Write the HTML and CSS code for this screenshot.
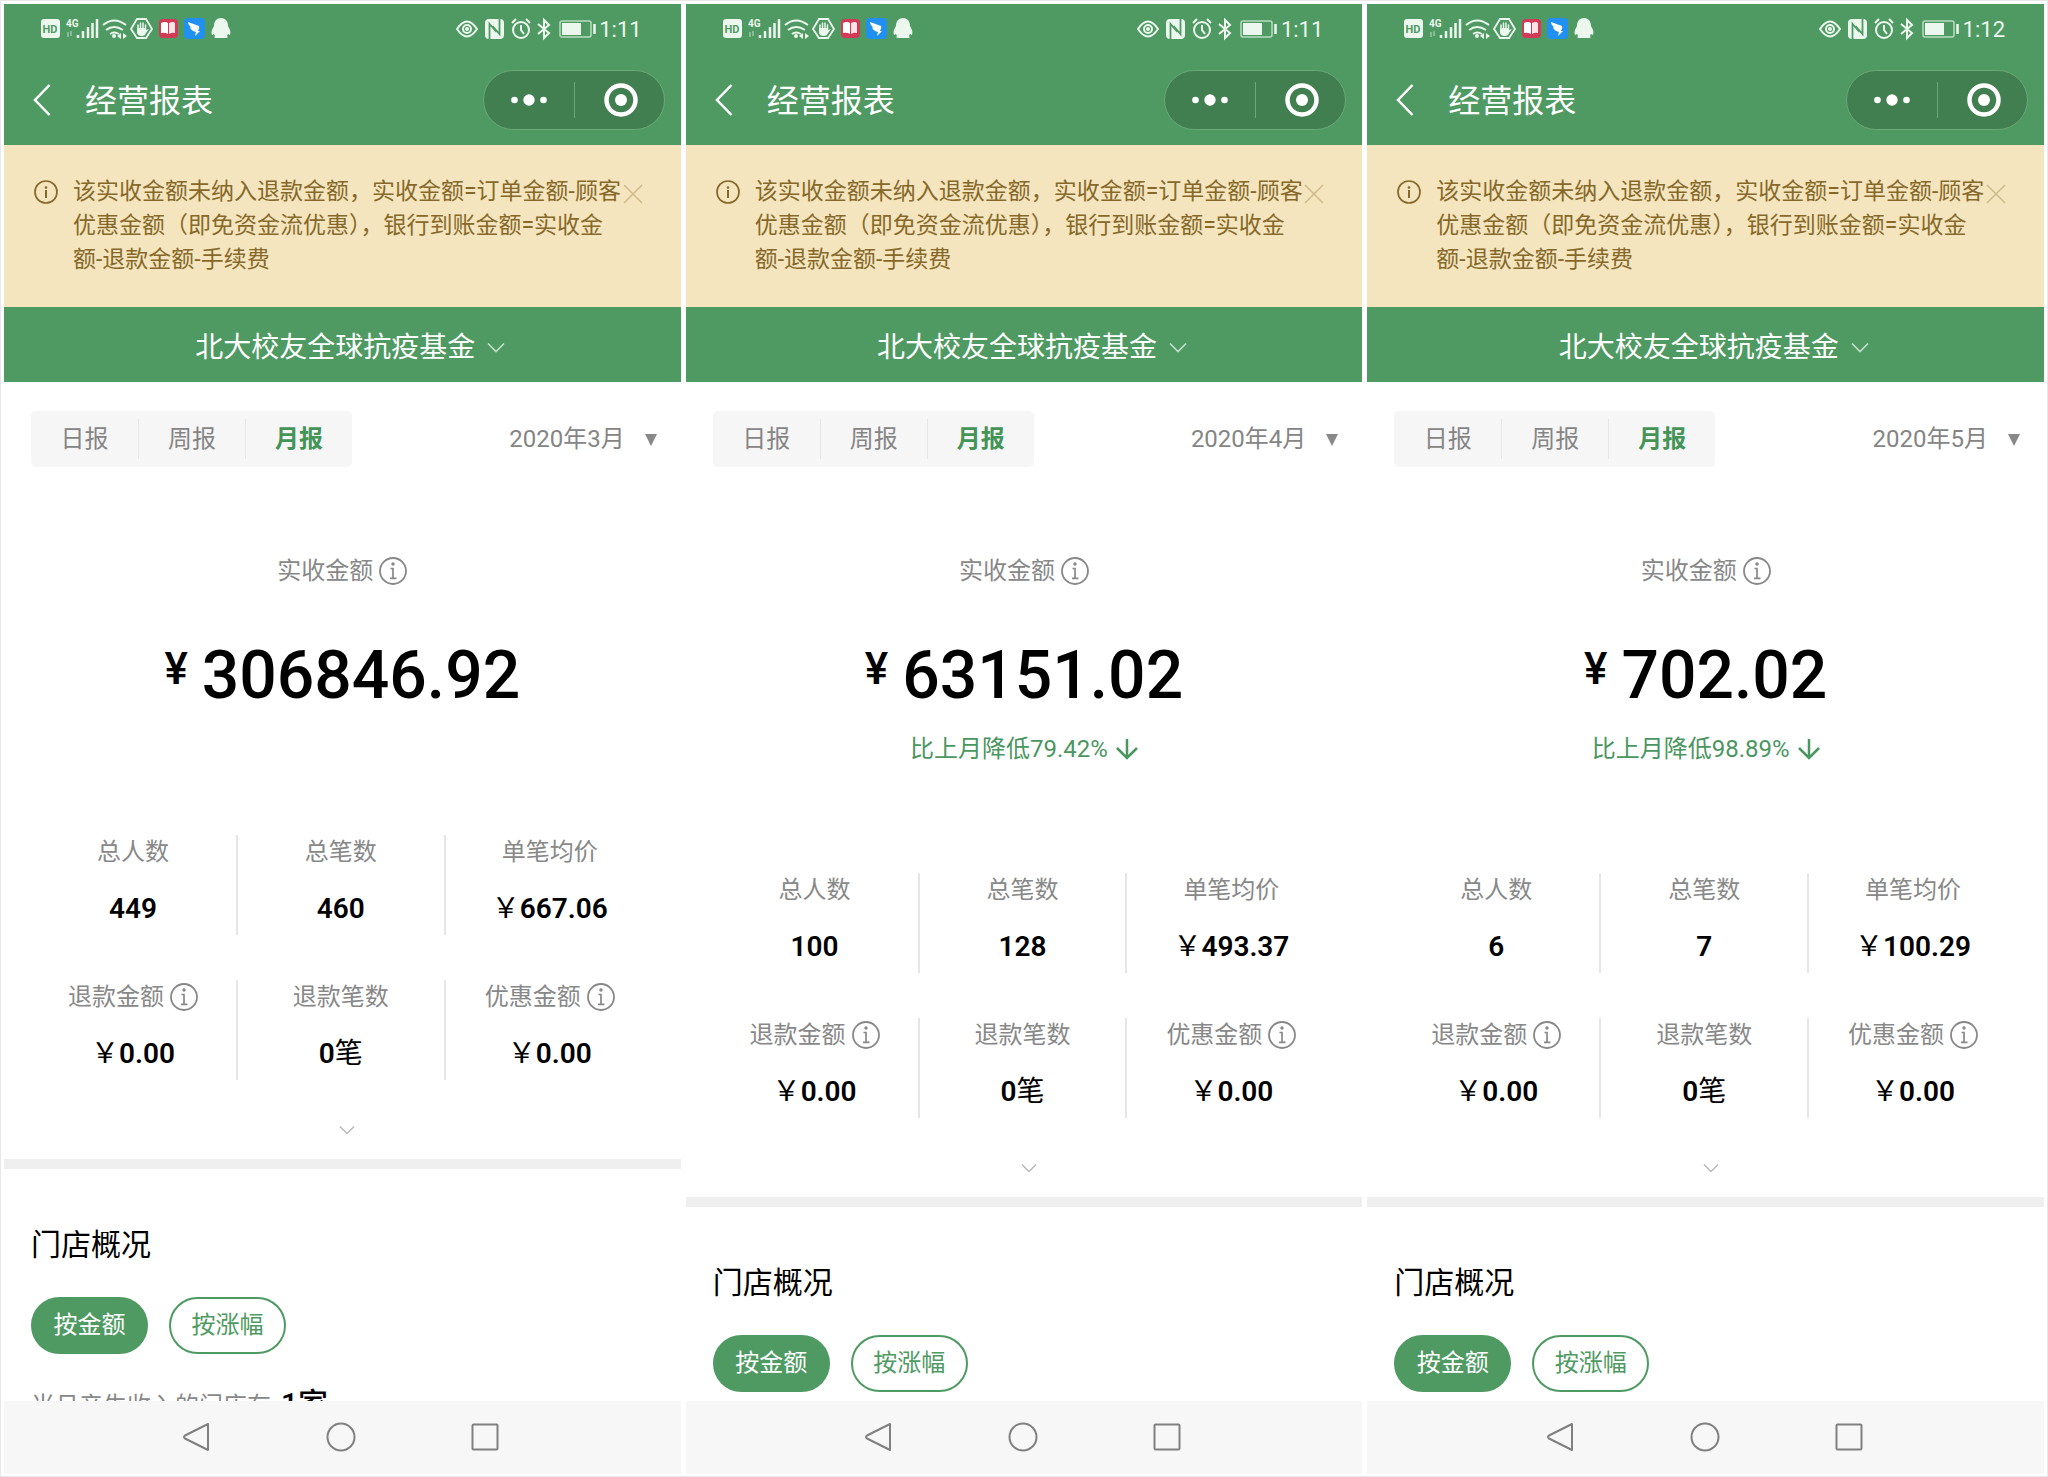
FILE: index.html
```html
<!DOCTYPE html>
<html lang="zh-CN">
<head>
    <meta charset="UTF-8">
    <meta name="viewport" content="width=device-width, initial-scale=1.0">
    <title>经营报表</title>
    <link rel="stylesheet" href="styles.css">
</head>
<body>
    <!-- shared icons -->
    <svg class="sprite" aria-hidden="true">
        <symbol id="i-left" viewBox="0 0 192 24">
            <rect x="1" y="2" width="19" height="19" rx="3" fill="#ecf7ee"/>
            <text x="10" y="16" class="hd-text">HD</text>
            <text x="26" y="10" class="net-text">4G</text>
            <path d="M28 20v-5M31 14v5" stroke="#9bc9a5" stroke-width="1.5"/>
            <path d="M38 21v-3M43 21v-7M48 21V10M52.500 21V6M57 21V2" stroke="#ecf7ee" stroke-width="2.5" fill="none"/>
            <path d="M63 8q11-9 23 0M66 13q8-6 17 0M70 17q4-3 9 0" stroke="#ecf7ee" stroke-width="2" fill="none"/>
            <circle cx="74" cy="19" r="2" fill="#ecf7ee"/>
            <path d="M81 16v6l-4-3zM83 16v6l4-3z" fill="#ecf7ee"/>
            <path d="M97 2h9l6 10-6 9h-9l-6-9z" stroke="#ecf7ee" stroke-width="1.8" fill="none"/>
            <path d="M97 11v4q0 4 5 4 3 0 4-3l3-4-3 1v-2z" fill="#ecf7ee"/>
            <path d="M98 13V8M100.500 12V6M103 12V6M105.500 13V8" stroke="#ecf7ee" stroke-width="1.5" stroke-linecap="round"/>
            <rect x="119" y="2" width="19" height="19" rx="4" fill="#d43a57"/>
            <path d="M121 6q4-2 7 0v11q-3-2-7-1z" fill="#fff"/>
            <path d="M129 6q4-2 6 0v10q-3-1-6 1z" fill="#fbe3e6"/>
            <rect x="144" y="1" width="21" height="21" rx="4" fill="#2090f3"/>
            <path d="M148 5l11 4q1 2-1 5h2l-5 5 1-4-3-1q-3-2-3-4l2 1q-4-3-4-6z" fill="#fff"/>
            <path d="M181 1c5 0 7 4 7 8 2 4 3 5 2 9l-2-1-1 2c1 1 1 2-1 2h-10c-2 0-2-1-1-2l-1-2-2 1c-1-4 0-5 2-9 0-4 2-8 7-8z" fill="#ecf7ee"/>
        </symbol>
        <symbol id="i-right" viewBox="0 0 142 24">
            <path d="M1 12q10-15 20 0-10 15-20 0z" fill="none" stroke="#ecf7ee" stroke-width="2"/>
            <circle cx="11" cy="12" r="4" fill="none" stroke="#ecf7ee" stroke-width="2"/>
            <circle cx="11" cy="12" r="2" fill="#ecf7ee"/>
            <rect x="29" y="2" width="19" height="20" rx="4" fill="#ecf7ee"/>
            <path d="M33.500 22V7l7 8M43.500 2v15l-7-8" fill="none" stroke="#4f9a63" stroke-width="1.800"/>
            <circle cx="65" cy="13" r="8" fill="none" stroke="#ecf7ee" stroke-width="2"/>
            <path d="M65 8v5l3 4M56 6l4-4M74 6l-4-4" fill="none" stroke="#ecf7ee" stroke-width="2"/>
            <path d="M82 7l11 9-5 5V3l5 5-11 9" fill="none" stroke="#ecf7ee" stroke-width="2"/>
            <rect x="104" y="4" width="31" height="16" rx="2" fill="none" stroke="#b9dbc0" stroke-width="1.500"/>
            <rect x="106" y="6" width="19" height="12" fill="#ecf7ee"/>
            <path d="M138.500 7v10" stroke="#ecf7ee" stroke-width="2.500"/>
        </symbol>
        <symbol id="i-back" viewBox="0 0 18 32"><path d="M16.500 1L2 16l14.500 15" fill="none" stroke="#fff" stroke-width="2.500"/></symbol>
        <symbol id="i-dots" viewBox="0 0 36 12"><circle cx="3.500" cy="6" r="3.300" fill="#fff"/><circle cx="18" cy="6" r="5.700" fill="#fff"/><circle cx="32.500" cy="6" r="3.300" fill="#fff"/></symbol>
        <symbol id="i-target" viewBox="0 0 34 34"><circle cx="17" cy="17" r="14.500" fill="none" stroke="#fff" stroke-width="4.500"/><circle cx="17" cy="17" r="6" fill="#fff"/></symbol>
        <symbol id="i-tip" viewBox="0 0 24 24"><circle cx="12" cy="12" r="11" fill="none" stroke="currentColor" stroke-width="1.700"/><circle cx="12" cy="7.500" r="1.300" fill="currentColor"/><path d="M12 10v8" stroke="currentColor" stroke-width="2"/></symbol>
        <symbol id="i-info" viewBox="0 0 28 28"><circle cx="14" cy="14" r="13" fill="none" stroke="currentColor" stroke-width="1.800"/><circle cx="14" cy="7" r="1.700" fill="currentColor"/><path d="M11.500 11.500H14V21M11 21.300h6.500" fill="none" stroke="currentColor" stroke-width="1.700"/></symbol>
        <symbol id="i-close" viewBox="0 0 20 20"><path d="M1 1l18 18M19 1L1 19" stroke="#cfba8b" stroke-width="1.500"/></symbol>
        <symbol id="i-down" viewBox="0 0 18 12"><path d="M1 1.500l8 8 8-8" fill="none" stroke="currentColor" stroke-width="1.600"/></symbol>
        <symbol id="i-caret" viewBox="0 0 12 14"><path d="M0 1h12L6 13z" fill="#888"/></symbol>
        <symbol id="i-drop" viewBox="0 0 22 22"><path d="M11 1v19M1 10l10 10 10-10" fill="none" stroke="currentColor" stroke-width="2.500"/></symbol>
        <symbol id="i-nav-back" viewBox="0 0 30 30"><path d="M26 2v26L3 16.500q-2-1.500 0-3z" fill="none" stroke="#808080" stroke-width="2" stroke-linejoin="round"/></symbol>
        <symbol id="i-nav-home" viewBox="0 0 30 30"><circle cx="15" cy="15" r="13.500" fill="none" stroke="#808080" stroke-width="2"/></symbol>
        <symbol id="i-nav-recent" viewBox="0 0 30 30"><rect x="2.500" y="2.500" width="25" height="25" rx="1" fill="none" stroke="#808080" stroke-width="2"/></symbol>
    </svg>

    <main class="board">
        <section class="phone">
            <header class="header">
                <div class="status">
                    <svg class="status-left"><use href="#i-left"/></svg>
                    <svg class="status-right"><use href="#i-right"/></svg>
                    <span class="time">1:11</span>
                </div>
                <div class="titlebar">
                    <button class="back" aria-label="返回"><svg width="18" height="32"><use href="#i-back"/></svg></button>
                    <h1>经营报表</h1>
                    <div class="capsule">
                        <button aria-label="更多"><svg width="36" height="12"><use href="#i-dots"/></svg></button>
                        <button aria-label="关闭"><svg width="34" height="34"><use href="#i-target"/></svg></button>
                    </div>
                </div>
            </header>
            <div class="notice">
                <svg class="tip" width="24" height="24"><use href="#i-tip"/></svg>
                <p>该实收金额未纳入退款金额，实收金额=订单金额-顾客优惠金额（即免资金流优惠），银行到账金额=实收金额-退款金额-手续费</p>
                <button class="close" aria-label="关闭提示"><svg width="20" height="20"><use href="#i-close"/></svg></button>
            </div>
            <button class="store">北大校友全球抗疫基金<svg width="18" height="12"><use href="#i-down"/></svg></button>
            <div class="content">
                <div class="filter">
                    <div class="tabs">
                        <button>日报</button>
                        <button>周报</button>
                        <button class="active">月报</button>
                    </div>
                    <button class="month">2020年3月<svg width="12" height="14"><use href="#i-caret"/></svg></button>
                </div>
                <div class="hero">
                    <div class="label">实收金额<svg width="28" height="28"><use href="#i-info"/></svg></div>
                    <div class="amount"><span class="yen">¥</span>306846.92</div>
                </div>
                <div class="stats">
                    <div class="stat"><div class="label">总人数</div><div class="value">449</div></div>
                    <div class="stat"><div class="label">总笔数</div><div class="value">460</div></div>
                    <div class="stat"><div class="label">单笔均价</div><div class="value"><span class="cn">￥</span>667.06</div></div>
                    <div class="stat"><div class="label">退款金额<svg width="28" height="28"><use href="#i-info"/></svg></div><div class="value"><span class="cn">￥</span>0.00</div></div>
                    <div class="stat"><div class="label">退款笔数</div><div class="value">0<span class="cn">笔</span></div></div>
                    <div class="stat"><div class="label">优惠金额<svg width="28" height="28"><use href="#i-info"/></svg></div><div class="value"><span class="cn">￥</span>0.00</div></div>
                </div>
                <button class="more" aria-label="展开"><svg width="16" height="11"><use href="#i-down"/></svg></button>
                <div class="shops">
                    <h2>门店概况</h2>
                    <div class="pills">
                        <button class="active">按金额</button>
                        <button>按涨幅</button>
                    </div>
                    <p class="summary">当月产生收入的门店有 <span>1家</span></p>
                </div>
            </div>
            <nav class="navbar">
                <button aria-label="返回"><svg width="30" height="30"><use href="#i-nav-back"/></svg></button>
                <button aria-label="主页"><svg width="30" height="30"><use href="#i-nav-home"/></svg></button>
                <button aria-label="最近任务"><svg width="30" height="30"><use href="#i-nav-recent"/></svg></button>
            </nav>
        </section>

        <section class="phone">
            <header class="header">
                <div class="status">
                    <svg class="status-left"><use href="#i-left"/></svg>
                    <svg class="status-right"><use href="#i-right"/></svg>
                    <span class="time">1:11</span>
                </div>
                <div class="titlebar">
                    <button class="back" aria-label="返回"><svg width="18" height="32"><use href="#i-back"/></svg></button>
                    <h1>经营报表</h1>
                    <div class="capsule">
                        <button aria-label="更多"><svg width="36" height="12"><use href="#i-dots"/></svg></button>
                        <button aria-label="关闭"><svg width="34" height="34"><use href="#i-target"/></svg></button>
                    </div>
                </div>
            </header>
            <div class="notice">
                <svg class="tip" width="24" height="24"><use href="#i-tip"/></svg>
                <p>该实收金额未纳入退款金额，实收金额=订单金额-顾客优惠金额（即免资金流优惠），银行到账金额=实收金额-退款金额-手续费</p>
                <button class="close" aria-label="关闭提示"><svg width="20" height="20"><use href="#i-close"/></svg></button>
            </div>
            <button class="store">北大校友全球抗疫基金<svg width="18" height="12"><use href="#i-down"/></svg></button>
            <div class="content">
                <div class="filter">
                    <div class="tabs">
                        <button>日报</button>
                        <button>周报</button>
                        <button class="active">月报</button>
                    </div>
                    <button class="month">2020年4月<svg width="12" height="14"><use href="#i-caret"/></svg></button>
                </div>
                <div class="hero with-compare">
                    <div class="label">实收金额<svg width="28" height="28"><use href="#i-info"/></svg></div>
                    <div class="amount"><span class="yen">¥</span>63151.02</div>
                    <div class="compare">比上月降低79.42%<svg width="22" height="22"><use href="#i-drop"/></svg></div>
                </div>
                <div class="stats">
                    <div class="stat"><div class="label">总人数</div><div class="value">100</div></div>
                    <div class="stat"><div class="label">总笔数</div><div class="value">128</div></div>
                    <div class="stat"><div class="label">单笔均价</div><div class="value"><span class="cn">￥</span>493.37</div></div>
                    <div class="stat"><div class="label">退款金额<svg width="28" height="28"><use href="#i-info"/></svg></div><div class="value"><span class="cn">￥</span>0.00</div></div>
                    <div class="stat"><div class="label">退款笔数</div><div class="value">0<span class="cn">笔</span></div></div>
                    <div class="stat"><div class="label">优惠金额<svg width="28" height="28"><use href="#i-info"/></svg></div><div class="value"><span class="cn">￥</span>0.00</div></div>
                </div>
                <button class="more" aria-label="展开"><svg width="16" height="11"><use href="#i-down"/></svg></button>
                <div class="shops">
                    <h2>门店概况</h2>
                    <div class="pills">
                        <button class="active">按金额</button>
                        <button>按涨幅</button>
                    </div>
                </div>
            </div>
            <nav class="navbar">
                <button aria-label="返回"><svg width="30" height="30"><use href="#i-nav-back"/></svg></button>
                <button aria-label="主页"><svg width="30" height="30"><use href="#i-nav-home"/></svg></button>
                <button aria-label="最近任务"><svg width="30" height="30"><use href="#i-nav-recent"/></svg></button>
            </nav>
        </section>

        <section class="phone">
            <header class="header">
                <div class="status">
                    <svg class="status-left"><use href="#i-left"/></svg>
                    <svg class="status-right"><use href="#i-right"/></svg>
                    <span class="time">1:12</span>
                </div>
                <div class="titlebar">
                    <button class="back" aria-label="返回"><svg width="18" height="32"><use href="#i-back"/></svg></button>
                    <h1>经营报表</h1>
                    <div class="capsule">
                        <button aria-label="更多"><svg width="36" height="12"><use href="#i-dots"/></svg></button>
                        <button aria-label="关闭"><svg width="34" height="34"><use href="#i-target"/></svg></button>
                    </div>
                </div>
            </header>
            <div class="notice">
                <svg class="tip" width="24" height="24"><use href="#i-tip"/></svg>
                <p>该实收金额未纳入退款金额，实收金额=订单金额-顾客优惠金额（即免资金流优惠），银行到账金额=实收金额-退款金额-手续费</p>
                <button class="close" aria-label="关闭提示"><svg width="20" height="20"><use href="#i-close"/></svg></button>
            </div>
            <button class="store">北大校友全球抗疫基金<svg width="18" height="12"><use href="#i-down"/></svg></button>
            <div class="content">
                <div class="filter">
                    <div class="tabs">
                        <button>日报</button>
                        <button>周报</button>
                        <button class="active">月报</button>
                    </div>
                    <button class="month">2020年5月<svg width="12" height="14"><use href="#i-caret"/></svg></button>
                </div>
                <div class="hero with-compare">
                    <div class="label">实收金额<svg width="28" height="28"><use href="#i-info"/></svg></div>
                    <div class="amount"><span class="yen">¥</span>702.02</div>
                    <div class="compare">比上月降低98.89%<svg width="22" height="22"><use href="#i-drop"/></svg></div>
                </div>
                <div class="stats">
                    <div class="stat"><div class="label">总人数</div><div class="value">6</div></div>
                    <div class="stat"><div class="label">总笔数</div><div class="value">7</div></div>
                    <div class="stat"><div class="label">单笔均价</div><div class="value"><span class="cn">￥</span>100.29</div></div>
                    <div class="stat"><div class="label">退款金额<svg width="28" height="28"><use href="#i-info"/></svg></div><div class="value"><span class="cn">￥</span>0.00</div></div>
                    <div class="stat"><div class="label">退款笔数</div><div class="value">0<span class="cn">笔</span></div></div>
                    <div class="stat"><div class="label">优惠金额<svg width="28" height="28"><use href="#i-info"/></svg></div><div class="value"><span class="cn">￥</span>0.00</div></div>
                </div>
                <button class="more" aria-label="展开"><svg width="16" height="11"><use href="#i-down"/></svg></button>
                <div class="shops">
                    <h2>门店概况</h2>
                    <div class="pills">
                        <button class="active">按金额</button>
                        <button>按涨幅</button>
                    </div>
                </div>
            </div>
            <nav class="navbar">
                <button aria-label="返回"><svg width="30" height="30"><use href="#i-nav-back"/></svg></button>
                <button aria-label="主页"><svg width="30" height="30"><use href="#i-nav-home"/></svg></button>
                <button aria-label="最近任务"><svg width="30" height="30"><use href="#i-nav-recent"/></svg></button>
            </nav>
        </section>
    </main>
</body>
</html>
```
FILE: styles.css
```css
* {
    box-sizing: border-box;
}
body {
    margin: 0;
    background-color: #fff;
    color: #000;
    font-family: Roboto, "Noto Sans CJK SC", sans-serif;
    font-size: 24px;
}
h1, h2, p {
    margin: 0;
    font-weight: 400;
}
button {
    margin: 0;
    padding: 0;
    border: 0;
    background: none;
    color: inherit;
    font: inherit;
    cursor: pointer;
}
svg {
    display: block;
    flex: none;
}
.sprite {
    display: none;
}
.board {
    display: grid;
    grid-template-columns: repeat(3, 1fr);
    grid-template-rows: minmax(0, 1fr);
    gap: 5px;
    height: 100vh;
    padding: 3px 3px 2px;
    border: 1px solid #e8e8e8;
}
.phone {
    display: flex;
    flex-direction: column;
    min-width: 0;
    min-height: 0;
}

/* header */
.header {
    flex: none;
    background-color: #4f9a63;
    color: #fff;
}
.status {
    display: flex;
    align-items: center;
    height: 50px;
    padding: 0 39px 0 36px;
}
.status-left {
    width: 192px;
    height: 24px;
}
.status-right {
    width: 142px;
    height: 24px;
    margin-left: auto;
}
.time {
    width: 44px;
    text-align: right;
    font-size: 22px;
    color: #ecf7ee;
}
.hd-text {
    font: 700 11px Roboto, sans-serif;
    fill: #4f9a63;
    text-anchor: middle;
}
.net-text {
    font: 700 10px Roboto, sans-serif;
    fill: #ecf7ee;
}
.titlebar {
    display: flex;
    align-items: center;
    height: 91px;
    padding: 0 16px 0 29px;
}
.back {
    margin-right: 34px;
}
.titlebar h1 {
    padding-top: 2px;
    font-size: 32px;
    line-height: 48px;
}
.capsule {
    display: flex;
    width: 182px;
    height: 60px;
    margin-left: auto;
    border: 1px solid #69a878;
    border-radius: 30px;
    background-color: #417f50;
}
.capsule button {
    flex: none;
    display: flex;
    align-items: center;
    justify-content: center;
    width: 90px;
}
.capsule button + button {
    padding-left: 4px;
    background: linear-gradient(#69a878, #69a878) left center / 1px 36px no-repeat;
}

/* notice */
.notice {
    display: flex;
    flex: none;
    padding: 30px 38px 30px 30px;
    background-color: #f4e5be;
    color: #86692a;
}
.notice p {
    flex: 1;
    margin-left: 15px;
    font-size: 23px;
    line-height: 34px;
}
.tip {
    margin-top: 5px;
}
.close {
    align-self: flex-start;
    margin-top: 9px;
}
.store {
    display: flex;
    align-items: center;
    justify-content: center;
    gap: 12px;
    flex: none;
    height: 75px;
    padding-left: 16px;
    background-color: #4f9a63;
    color: #fff;
    font-size: 28px;
}
.store svg {
    margin-top: 6px;
    color: #c3e0c9;
}

/* report */
.content {
    flex: 1;
    min-height: 0;
    overflow: hidden;
}
.filter {
    display: flex;
    align-items: center;
    justify-content: space-between;
    padding: 29px 24px 0 27px;
    color: #858585;
}
.tabs {
    display: flex;
    padding: 8px 0;
    border-radius: 5px;
    background-color: #f6f6f6;
}
.tabs button {
    width: 107px;
    height: 40px;
    line-height: 40px;
}
.tabs button + button {
    border-left: 1px solid #e6e6e6;
}
.tabs .active {
    color: #449457;
    font-weight: 700;
}
.month {
    display: flex;
    align-items: center;
    gap: 20px;
    line-height: 40px;
}
.month svg {
    margin-top: 2px;
}
.hero {
    padding: 88px 0 120px;
}
.with-compare {
    padding-bottom: 108px;
}
.label {
    display: flex;
    align-items: center;
    justify-content: center;
    gap: 6px;
    line-height: 32px;
    color: #888;
}
.amount {
    display: flex;
    justify-content: center;
    gap: 14px;
    margin-top: 50px;
    font-size: 66px;
    font-weight: 500;
    line-height: 78px;
}
.yen {
    font-size: 44px;
    line-height: 64px;
}
.compare {
    display: flex;
    align-items: center;
    justify-content: center;
    gap: 8px;
    margin-top: 18px;
    line-height: 32px;
    color: #4a9660;
}
.stats {
    display: grid;
    grid-template-columns: repeat(3, 1fr);
    row-gap: 45px;
    padding: 0 27px 0 26px;
}
.stat {
    height: 100px;
    padding-top: 1px;
}
.stat:not(:nth-child(3n)) {
    border-right: 2px solid #e6e6e6;
}
.value {
    margin-top: 24px;
    text-align: center;
    font-size: 28px;
    font-weight: 600;
    line-height: 34px;
}
.cn {
    font-weight: 400;
}
.more {
    display: flex;
    justify-content: center;
    width: 100%;
    padding: 45px 0 23px 10px;
    color: #b8b8b8;
}
.shops {
    padding: 58px 27px 0;
    border-top: 10px solid #efefef;
}
.shops h2 {
    font-size: 30px;
    line-height: 36px;
}
.pills {
    display: flex;
    gap: 21px;
    margin-top: 34px;
}
.pills button {
    width: 117px;
    height: 57px;
    border: 2px solid #4f9a63;
    border-radius: 29px;
    color: #4f9a63;
    line-height: 53px;
}
.pills .active {
    background-color: #4f9a63;
    color: #fff;
}
.summary {
    margin-top: 32px;
    line-height: 36px;
    color: #888;
}
.summary span {
    margin-left: 4px;
    color: #000;
    font-size: 30px;
    font-weight: 500;
}

/* system navigation */
.navbar {
    display: flex;
    align-items: center;
    justify-content: center;
    gap: 114px;
    flex: none;
    height: 73px;
    padding: 0 2px 2px 0;
    background-color: #f7f7f7;
}
```
